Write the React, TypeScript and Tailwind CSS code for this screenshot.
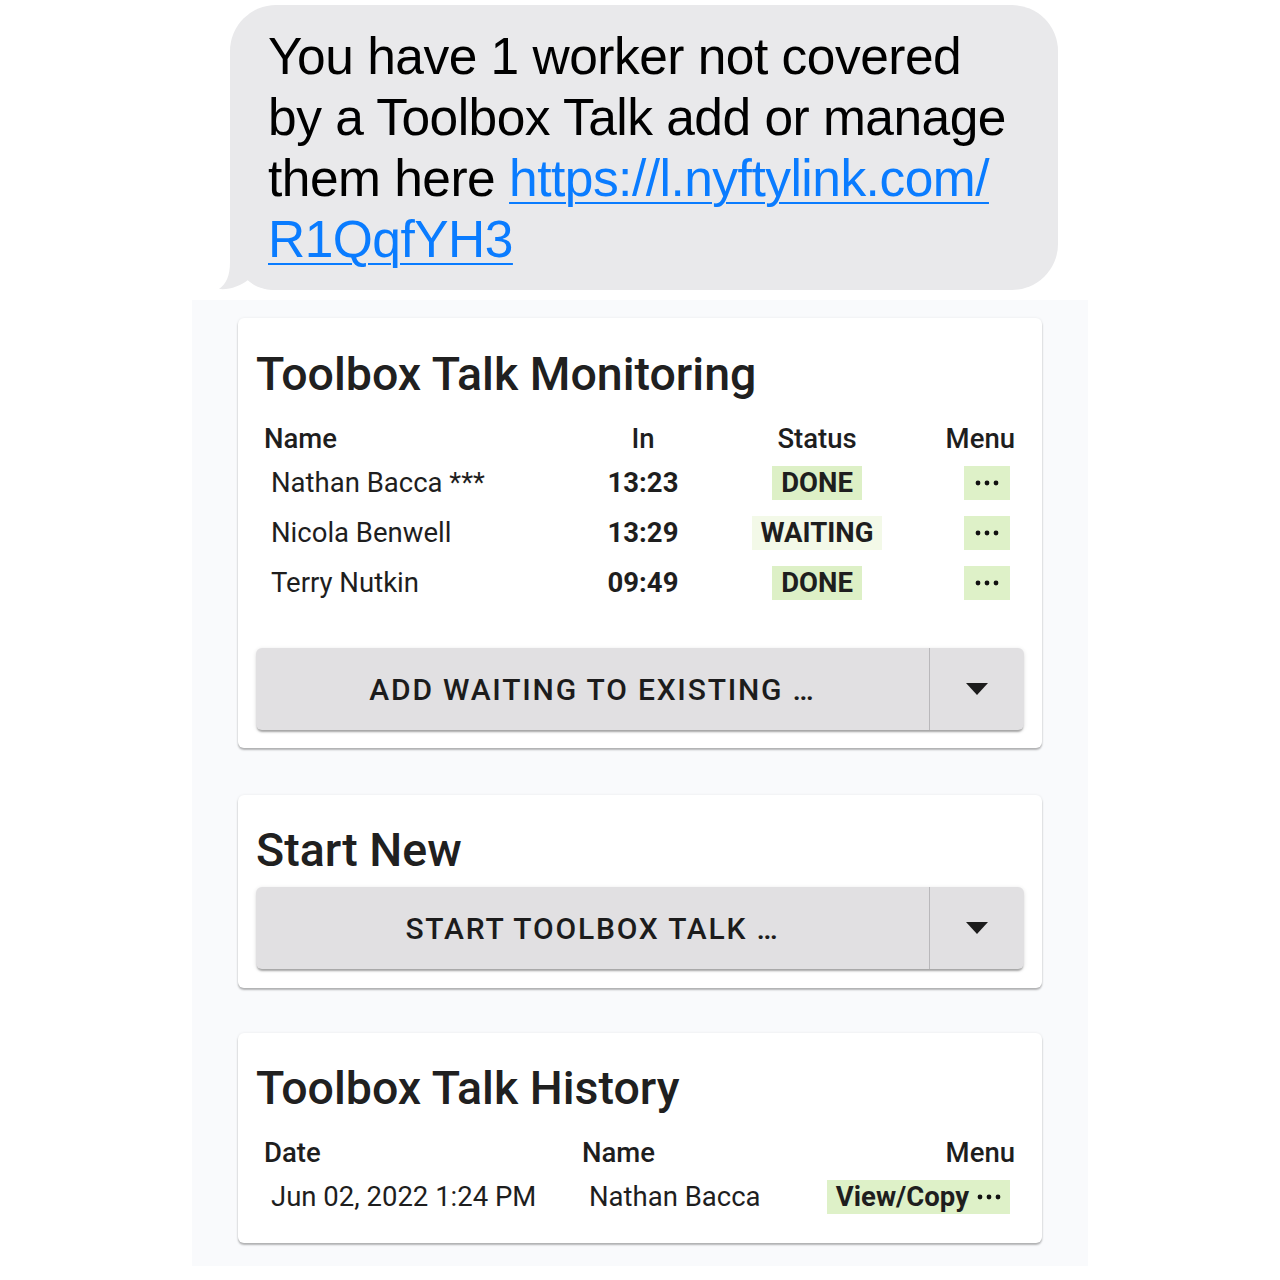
import React from "react";

const font = { fontFamily: "Roboto, 'Liberation Sans', sans-serif" };

interface Worker {
  name: string;
  time: string;
  status: "DONE" | "WAITING";
}

const workers: Worker[] = [
  { name: "Nathan Bacca ***", time: "13:23", status: "DONE" },
  { name: "Nicola Benwell", time: "13:29", status: "WAITING" },
  { name: "Terry Nutkin", time: "09:49", status: "DONE" },
];

const Dots = () => (
  <svg width="24" height="6" viewBox="0 0 24 6" className="block">
    <circle cx="3" cy="3" r="2.4" fill="#111" />
    <circle cx="12" cy="3" r="2.4" fill="#111" />
    <circle cx="21" cy="3" r="2.4" fill="#111" />
  </svg>
);

const SplitButton = ({ label }: { label: string }) => (
  <div className="flex h-[82px] rounded-[6px] bg-[#e1e0e2] shadow-[0_3px_2px_-1px_rgba(0,0,0,0.3),0_1px_4px_rgba(0,0,0,0.12)]">
    <div className="flex flex-1 items-center justify-center border-r border-[#b9b8bb] text-[30px] font-medium tracking-[0.06em] text-[#1c1c1c]">
      {label}
    </div>
    <div className="flex w-[94px] items-center justify-center">
      <svg width="22" height="12" viewBox="0 0 22 12">
        <path d="M0 0 L22 0 L11 12 Z" fill="#1c1c1c" />
      </svg>
    </div>
  </div>
);

const Card = ({ className, children }: { className: string; children: React.ReactNode }) => (
  <div
    className={`w-[804px] rounded-[6px] bg-white shadow-[0_2px_2px_rgba(0,0,0,0.28),0_0_3px_rgba(0,0,0,0.07)] ${className}`}
  >
    {children}
  </div>
);

export default function App() {
  return (
    <div className="relative h-[1280px] w-[1280px] overflow-hidden bg-white" style={font}>
      {/* message bubble */}
      <div className="relative ml-[230px] mt-[5px] h-[285px] w-[828px] rounded-[46px] bg-[#e9e9eb] pl-[38px] pt-[21px]">
        <svg
          className="absolute left-[-16px] top-[235px]"
          width="62"
          height="50"
          viewBox="0 0 62 50"
        >
          <path
            d="M16 0 L16 22 C16 36 12 44 5 49 C16 50 26 46 34 40 C40 46 48 50 62 50 L62 0 Z"
            fill="#e9e9eb"
          />
        </svg>
        <p
          className="relative text-[51.5px] leading-[61px] tracking-[-0.01em] text-black"
          style={{ fontFamily: "'Liberation Sans', Arial, sans-serif" }}
        >
          You have 1 worker not covered
          <br />
          by a Toolbox Talk add or manage
          <br />
          them here{" "}
          <a className="text-[#0a7cff] underline decoration-[2px] underline-offset-[6px]">
            https://l.nyftylink.com/
            <br />
            R1QqfYH3
          </a>
        </p>
      </div>

      {/* app panel */}
      <div className="ml-[192px] mt-[10px] w-[896px] bg-[#f9fafc] pb-[23px] pl-[46px] pt-[18px]">
        <Card className="pb-[18px] pl-[18px] pr-[18px] pt-[30px]">
          <h2 className="text-[46.5px] font-medium leading-[52px] text-[#202020]">
            Toolbox Talk Monitoring
          </h2>
          <div className="mt-[18px] pl-[8px] pr-[9px] text-[27.5px] text-[#1e1e1e]">
            <div className="grid h-[36px] grid-cols-[319px_120px_228px_84px] items-center font-medium">
              <span>Name</span>
              <span className="text-center">In</span>
              <span className="text-center">Status</span>
              <span className="text-right">Menu</span>
            </div>
            <div className="mt-[4px]">
              {workers.map((w) => (
                <div
                  key={w.name}
                  className="grid h-[50px] grid-cols-[319px_120px_228px_84px] items-center"
                >
                  <span className="pl-[7px]">{w.name}</span>
                  <span className="text-center font-bold">{w.time}</span>
                  <span className="flex justify-center">
                    <span
                      className={`flex h-[34px] items-center px-[9px] font-bold ${
                        w.status === "DONE" ? "bg-[#ddf0c6]" : "bg-[#f3f9e8]"
                      }`}
                    >
                      {w.status}
                    </span>
                  </span>
                  <span className="flex justify-end pr-[5px]">
                    <span className="flex h-[34px] w-[46px] items-center justify-center bg-[#def1c8]">
                      <Dots />
                    </span>
                  </span>
                </div>
              ))}
            </div>
          </div>
          <div className="mt-[40px]">
            <SplitButton label="ADD WAITING TO EXISTING …" />
          </div>
        </Card>

        <Card className="mt-[47px] pb-[19px] pl-[18px] pr-[18px] pt-[29px]">
          <h2 className="text-[46.5px] font-medium leading-[52px] text-[#202020]">
            Start New
          </h2>
          <div className="mt-[11px]">
            <SplitButton label="START TOOLBOX TALK …" />
          </div>
        </Card>

        <Card className="mt-[45px] pb-[21px] pl-[18px] pr-[18px] pt-[29px]">
          <h2 className="text-[46.5px] font-medium leading-[52px] text-[#202020]">
            Toolbox Talk History
          </h2>
          <div className="mt-[18px] pl-[8px] pr-[9px] text-[27.5px] text-[#1e1e1e]">
            <div className="grid h-[36px] grid-cols-[318px_1fr_auto] items-center font-medium">
              <span>Date</span>
              <span>Name</span>
              <span className="text-right">Menu</span>
            </div>
            <div className="mt-[4px] grid h-[50px] grid-cols-[318px_1fr_auto] items-center">
              <span className="pl-[7px]">Jun 02, 2022 1:24 PM</span>
              <span className="pl-[7px]">Nathan Bacca</span>
              <span className="flex justify-end pr-[5px]">
                <span className="flex h-[34px] items-center gap-[8px] bg-[#def1c8] px-[9px] font-bold">
                  View/Copy
                  <Dots />
                </span>
              </span>
            </div>
          </div>
        </Card>
      </div>
    </div>
  );
}
